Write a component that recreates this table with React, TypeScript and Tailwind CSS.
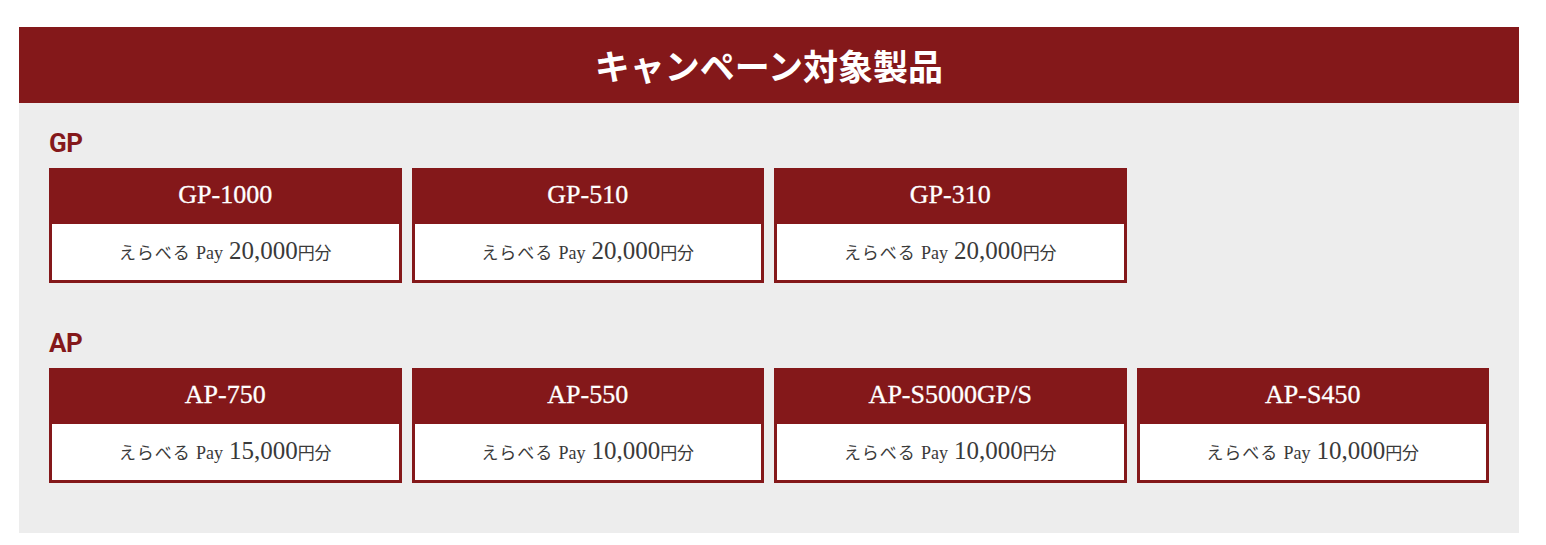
import React from "react";

type Item = { name: string; amount: string };

const gp: Item[] = [
  { name: "GP-1000", amount: "20,000" },
  { name: "GP-510", amount: "20,000" },
  { name: "GP-310", amount: "20,000" },
];

const ap: Item[] = [
  { name: "AP-750", amount: "15,000" },
  { name: "AP-550", amount: "10,000" },
  { name: "AP-S5000GP/S", amount: "10,000" },
  { name: "AP-S450", amount: "10,000" },
];

function Card({ item }: { item: Item }) {
  return (
    <div className="border-[3px] border-[#84181a] bg-white flex flex-col">
      <div className="bg-[#84181a] h-[53px] flex items-center justify-center text-white text-[26px] leading-none font-['Liberation_Serif','Noto_Sans_CJK_JP',serif] pb-[5px] [-webkit-text-stroke:0.3px_white]">
        {item.name}
      </div>
      <div className="h-[56px] flex items-center justify-center pb-[4px] text-[#3a3a3a] font-['Liberation_Serif','Noto_Sans_CJK_JP',serif]">
        <div className="flex items-baseline leading-none">
          <span className="text-[17px] tracking-[1px]">えらべる</span>
          <span className="text-[18px] ml-[5px]">Pay</span>
          <span className="text-[25px] ml-[6px]">{item.amount}</span>
          <span className="text-[17px]">円分</span>
        </div>
      </div>
    </div>
  );
}

function Section({ label, items }: { label: string; items: Item[] }) {
  return (
    <div>
      <div className="text-[#84181a] font-bold text-[26px] leading-[31px] mt-[1px] mb-[9px] font-['Roboto','Noto_Sans_CJK_JP',sans-serif] tracking-[-0.5px]">
        {label}
      </div>
      <div className="grid grid-cols-4 gap-x-[10px]">
        {items.map((it) => (
          <Card key={it.name} item={it} />
        ))}
      </div>
    </div>
  );
}

export default function App() {
  return (
    <div className="bg-white min-h-[545px] pt-[27px]">
      <div className="ml-[19px] w-[1500px]">
        <div className="bg-[#84181a] h-[76px] flex items-center justify-center">
          <h2 className="text-white font-bold text-[35px] leading-none font-['Noto_Sans_CJK_JP',sans-serif] pb-[2px]">
            キャンペーン対象製品
          </h2>
        </div>
        <div className="bg-[#ededed] pt-[24px] pb-[50px] px-[30px] flex flex-col gap-[44px]">
          <Section label="GP" items={gp} />
          <Section label="AP" items={ap} />
        </div>
      </div>
    </div>
  );
}
